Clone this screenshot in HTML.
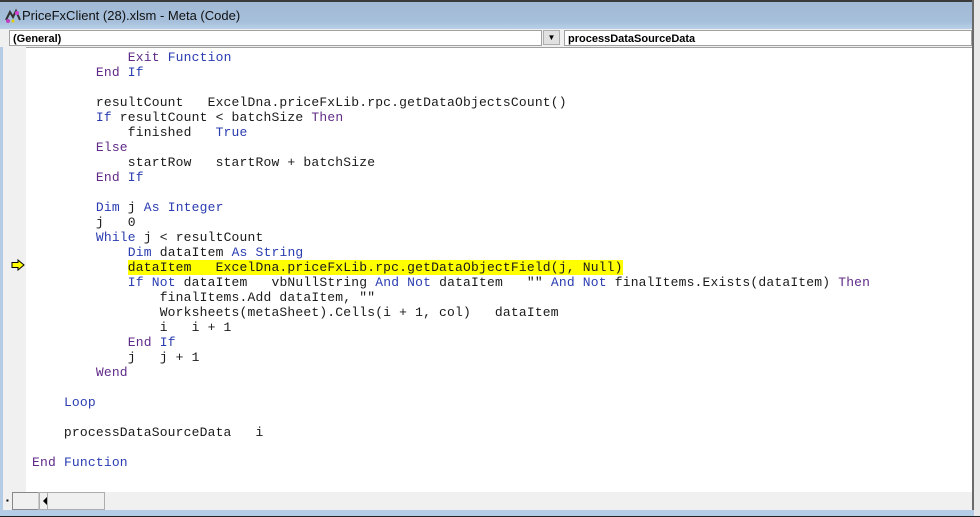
<!DOCTYPE html>
<html><head><meta charset="utf-8"><style>
*{margin:0;padding:0;box-sizing:border-box}
body{width:980px;height:517px;overflow:hidden;background:#f0f0f0;position:relative;font-family:"Liberation Sans",sans-serif}
.top{position:absolute;left:0;top:0;width:980px;height:2px;background:#3a3a3a}
.title{position:absolute;left:0;top:2px;width:974px;height:28px;background:linear-gradient(#a1b9d4,#a6bfda 70%,#bcd2ea);}
.title span{position:absolute;left:22px;top:6px;font-size:13px;color:#111}
.rside{position:absolute;left:972px;top:0;width:2px;height:517px;background:#6a6a6a}
.rfar{position:absolute;left:974px;top:0;width:6px;height:517px;background:#e8e8e8}
.combos{position:absolute;left:0;top:29px;width:972px;height:18px;background:#f0f0f0}
.cb{position:absolute;top:1px;height:16px;background:#fff;border:1px solid #a0a0a0;font-size:11px;font-weight:bold;padding:2px 0 0 3px;color:#000}
.btn{position:absolute;left:543px;top:1px;width:17px;height:15px;background:#e1e1e1;border:1px solid #adadad;font-size:8px;text-align:center;line-height:13px}
.lb{position:absolute;left:0;top:47px;width:3px;height:463px;background:#b4cce6}
.gut{position:absolute;left:3px;top:47px;width:23px;height:445px;background:#f0f0f0}
.code{position:absolute;left:26px;top:47px;width:946px;height:445px;background:#fff;border-top:1px solid #a0a0a0}
pre{position:absolute;left:6px;top:2px;font-family:"Liberation Mono",monospace;font-size:13px;letter-spacing:0.18px;line-height:15px;color:#1a1a1a}
.k{color:#2a3cb0}.p{color:#5f2a88}
.hl{background:#ffff00}
.arrow{position:absolute;left:11px;top:259px}
.bot{position:absolute;left:3px;top:492px;width:969px;height:18px;background:#f0f0f0}
.bb{position:absolute;left:0;top:510px;width:974px;height:6px;background:#b4cce6}
.bl{position:absolute;left:0;top:516px;width:980px;height:1px;background:#222}
</style></head><body>
<div class="top"></div>
<div class="title"><svg style="position:absolute;left:4px;top:6px" width="18" height="16"><path d="M2 12 L6 4 L9 9 L12 3 L16 12" stroke="#333" fill="none" stroke-width="2"/><circle cx="4" cy="13" r="2" fill="#c03cc0"/><circle cx="13" cy="5" r="2" fill="#d040d0"/><circle cx="9" cy="13" r="1.5" fill="#e0d000"/></svg><span>PriceFxClient (28).xlsm - Meta (Code)</span></div>
<div class="rside"></div><div class="rfar"></div>
<div class="combos">
<div class="cb" style="left:9px;width:533px">(General)</div>
<div class="btn">▼</div>
<div class="cb" style="left:564px;width:408px">processDataSourceData</div>
</div>
<div class="lb"></div>
<div class="gut"></div>
<svg class="arrow" width="14" height="12"><path d="M1 3.5 H7 V1 L13 6 L7 11 V8.5 H1 Z" fill="#ffff00" stroke="#000" stroke-width="1"/></svg>
<div class="code"><pre>            <span class="p">Exit</span> <span class="k">Function</span>
        <span class="p">End</span> <span class="k">If</span>

        resultCount   ExcelDna.priceFxLib.rpc.getDataObjectsCount()
        <span class="k">If</span> resultCount &lt; batchSize <span class="p">Then</span>
            finished   <span class="k">True</span>
        <span class="p">Else</span>
            startRow   startRow + batchSize
        <span class="p">End</span> <span class="k">If</span>

        <span class="k">Dim</span> j <span class="k">As</span> <span class="k">Integer</span>
        j   0
        <span class="k">While</span> j &lt; resultCount
            <span class="k">Dim</span> dataItem <span class="k">As</span> <span class="k">String</span>
            <span class="hl">dataItem   ExcelDna.priceFxLib.rpc.getDataObjectField(j, Null)</span>
            <span class="k">If</span> <span class="k">Not</span> dataItem   vbNullString <span class="k">And</span> <span class="k">Not</span> dataItem   "" <span class="k">And</span> <span class="k">Not</span> finalItems.Exists(dataItem) <span class="p">Then</span>
                finalItems.Add dataItem, ""
                Worksheets(metaSheet).Cells(i + 1, col)   dataItem
                i   i + 1
            <span class="p">End</span> <span class="k">If</span>
            j   j + 1
        <span class="p">Wend</span>

    <span class="k">Loop</span>

    processDataSourceData   i

<span class="p">End</span> <span class="k">Function</span></pre></div>
<div class="bot">
<div style="position:absolute;left:3px;top:1px;width:9px;height:15px;font-size:8px;line-height:15px">▪</div>
<div style="position:absolute;left:9px;top:0;width:27px;height:18px;border:1px solid #888;border-right:1px solid #ccc;background:#f0f0f0"></div>
<div style="position:absolute;left:36px;top:0;width:66px;height:18px;border:1px solid #adadad;background:#f0f0f0"></div>
<svg style="position:absolute;left:40px;top:4px" width="6" height="10"><path d="M5 0 L0 5 L5 10 Z" fill="#000"/></svg>
<div style="position:absolute;left:44px;top:1px;width:1px;height:16px;background:#adadad"></div>
</div>
<div class="bb"></div><div class="bl"></div>
</body></html>
